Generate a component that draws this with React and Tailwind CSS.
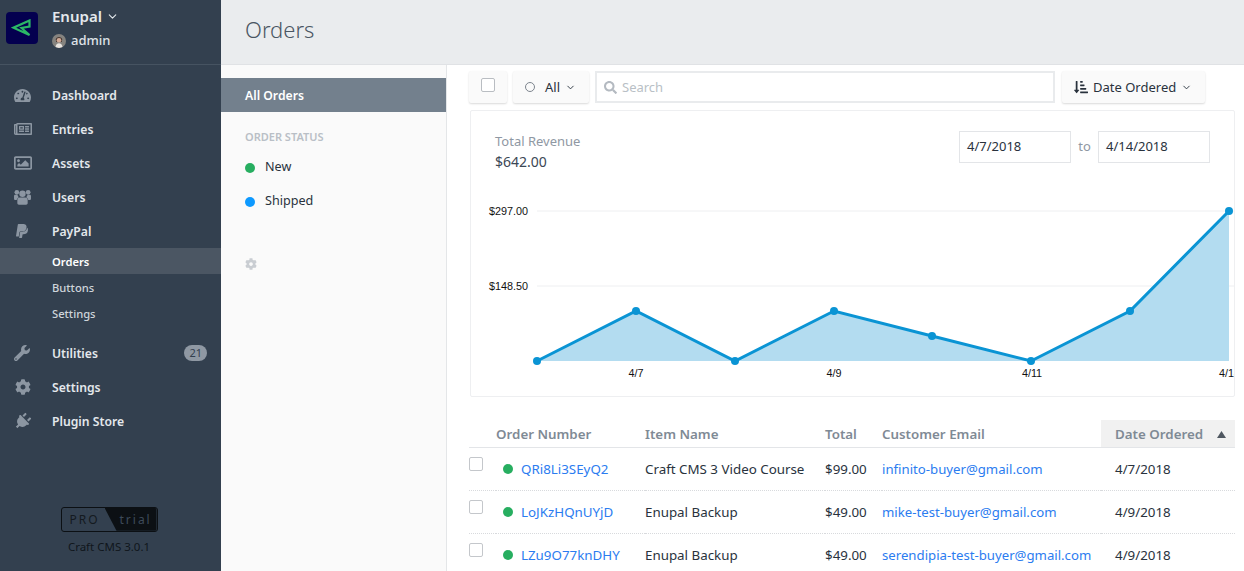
import { FaTachometerAlt, FaRegNewspaper, FaRegImage, FaPaypal, FaWrench, FaCog, FaPlug, FaSearch, FaSortAmountDownAlt } from 'react-icons/fa';
import { ChevronDown } from 'lucide-react';

function UsersIcon({ className }) {
  return (
    <svg viewBox="0 0 18 17" fill="currentColor" className={className}>
      <circle cx="9" cy="5" r="3.400" />
      <circle cx="3" cy="3.500" r="2.500" />
      <circle cx="15" cy="3.500" r="2.500" />
      <path d="M0 7.500C0 6.700.6 6.200 1.400 6.200h2.200c.3 1 .8 1.900 1.500 2.500-1.200.6-2 1.700-2.300 3H1.400C.6 11.700 0 11 0 10.300z" />
      <path d="M18 7.500c0-.8-.6-1.300-1.400-1.300h-2.200c-.3 1-.8 1.900-1.500 2.500 1.200.6 2 1.700 2.300 3h1.400c.8 0 1.400-.7 1.400-1.400z" />
      <path d="M6 9h6c1.500 0 2.500 1.100 2.500 2.600v3.400c0 1-.7 1.700-1.700 1.700H5.200c-1 0-1.700-.7-1.700-1.700v-3.400C3.500 10.100 4.500 9 6 9z" />
    </svg>
  );
}

const navTop = [
  { label: 'Dashboard', icon: FaTachometerAlt, iconClass: 'w-[17px] h-[17px]' },
  { label: 'Entries', icon: FaRegNewspaper, iconClass: 'w-[18px] h-[18px]' },
  { label: 'Assets', icon: FaRegImage, iconClass: 'w-[18px] h-[18px]' },
  { label: 'Users', icon: UsersIcon, iconClass: 'w-[17px] h-[16px]' },
  { label: 'PayPal', icon: FaPaypal, iconClass: 'w-[16px] h-[16px]' },
];

const navBottom = [
  { label: 'Utilities', icon: FaWrench, iconClass: 'w-[16px] h-[16px]', badge: '21' },
  { label: 'Settings', icon: FaCog, iconClass: 'w-[16px] h-[16px] ml-px' },
  { label: 'Plugin Store', icon: FaPlug, iconClass: 'w-[17px] h-[17px] rotate-45' },
];

const orders = [
  { id: 'QRi8Li3SEyQ2', item: 'Craft CMS 3 Video Course', total: '$99.00', email: 'infinito-buyer@gmail.com', date: '4/7/2018' },
  { id: 'LoJKzHQnUYjD', item: 'Enupal Backup', total: '$49.00', email: 'mike-test-buyer@gmail.com', date: '4/9/2018' },
  { id: 'LZu9O77knDHY', item: 'Enupal Backup', total: '$49.00', email: 'serendipia-test-buyer@gmail.com', date: '4/9/2018' },
];

function NavRow({ label, icon: Icon, badge, iconClass }) {
  return (
    <div className="h-[34px] flex items-center pl-[14px] pr-[14px] text-[12.2px] font-semibold text-[#e4e8ec]">
      <span className="w-[38px] flex-shrink-0 text-[#8c96a2]">
        <Icon className={iconClass} />
      </span>
      <span className="flex-1 pt-[2px]">{label}</span>
      {badge && (
        <span className="h-4 px-[5px] rounded-full bg-[#8f98a3] text-[#33404f] text-[11px] leading-4 font-normal">{badge}</span>
      )}
    </div>
  );
}

function Chart() {
  const points = [[67, 251], [166, 201], [265, 251], [364, 201], [462, 226], [561, 251], [660, 201], [759, 101]];
  const line = points.map((p) => p.join(',')).join(' ');
  return (
    <svg width="765" height="285" className="absolute left-[-1px] top-[-1px]" style={{ fontFamily: '"Liberation Sans", sans-serif' }}>
      <line x1="67" y1="101" x2="765" y2="101" stroke="#eeeff1" />
      <line x1="67" y1="176" x2="765" y2="176" stroke="#eeeff1" />
      <polygon points={`67,251 ${line} 759,251`} fill="#b3dcf0" />
      <polyline points={line} fill="none" stroke="#0a94d4" strokeWidth="3" />
      {points.map(([x, y]) => (
        <circle key={x} cx={x} cy={y} r="4" fill="#0a94d4" />
      ))}
      <text x="58" y="105" textAnchor="end" fontSize="10.8" fill="#111">$297.00</text>
      <text x="58" y="180" textAnchor="end" fontSize="10.8" fill="#111">$148.50</text>
      <text x="166" y="267" textAnchor="middle" fontSize="10.8" fill="#111">4/7</text>
      <text x="364" y="267" textAnchor="middle" fontSize="10.8" fill="#111">4/9</text>
      <text x="562" y="267" textAnchor="middle" fontSize="10.8" fill="#111">4/11</text>
      <text x="749" y="267" fontSize="10.8" fill="#111">4/14</text>
    </svg>
  );
}

export default function App() {
  return (
    <div className="h-[571px] w-[1244px] overflow-hidden flex bg-white text-[14px] text-[#29323d]" style={{ fontFamily: '"Noto Sans", sans-serif' }}>
      {/* Sidebar */}
      <aside className="w-[221px] flex-shrink-0 bg-[#33404f] flex flex-col">
        <div className="h-[65px] flex-shrink-0 border-b border-[#465361] flex items-start pl-[6px] pt-[12px]">
          <div className="w-8 h-8 rounded-[4px] bg-[#04004f] flex items-center justify-center">
            <svg width="22" height="18" viewBox="0 0 22 18" fill="none" stroke="#2bb866" strokeWidth="2.200">
              <path d="M18.500 16 2.500 8.700 18.500 1.500v6l-8 1.500z" />
            </svg>
          </div>
          <div className="ml-[14px] -mt-[8px]">
            <div className="flex items-center h-6 text-[15px] font-semibold text-[#e4e8ec]">
              Enupal
              <ChevronDown className="w-[13px] h-[13px] ml-1" />
            </div>
            <div className="flex items-center h-[22px] mt-[2px] text-[13px] font-medium text-[#dfe3e8]">
              <svg width="14" height="14" viewBox="0 0 14 14" className="mr-[5px]">
                <circle cx="7" cy="7" r="7" fill="#85837f" />
                <path d="M3.800 5.500C3.800 2 10.200 2 10.200 5.500L9.800 8H4.200z" fill="#4a3a32" />
                <circle cx="7" cy="6.300" r="2.300" fill="#d2ab98" />
                <path d="M3.500 13c.3-2.500 1.600-3.800 3.500-3.800s3.200 1.300 3.500 3.800L7 14z" fill="#e8e4df" />
              </svg>
              admin
            </div>
          </div>
        </div>
        <nav className="pt-[13px]">
          {navTop.map((n) => (
            <NavRow key={n.label} {...n} />
          ))}
          <div className="h-[26px] flex items-center pl-[52px] pt-[2px] bg-[#4b5663] text-[11.2px] font-semibold text-white">Orders</div>
          <div className="h-[26px] flex items-center pl-[52px] pt-[2px] text-[11.2px] font-medium text-[#cfd5db]">Buttons</div>
          <div className="h-[26px] flex items-center pl-[52px] pt-[2px] text-[11.2px] font-medium text-[#cfd5db]">Settings</div>
          <div className="h-[10px]" />
          {navBottom.map((n) => (
            <NavRow key={n.label} {...n} />
          ))}
        </nav>
        <div className="mt-auto pb-[16px] flex flex-col items-center pr-[3px]">
          <div className="w-[97px] h-[25px] rounded-[3px] border border-[#0c1014] flex overflow-hidden relative text-[12px] tracking-[2px]">
            <span className="w-[43px] pl-[8px] leading-[23px] text-[#141a20]">PRO</span>
            <span className="flex-1 bg-[#0c1014] pl-[15px] leading-[23px] text-[#3d4a59] [clip-path:polygon(0_0,100%_0,100%_100%,12px_100%)]">trial</span>
          </div>
          <div className="mt-[6px] text-[11.5px] text-[#10161c]">Craft CMS 3.0.1</div>
        </div>
      </aside>

      <div className="flex-1 min-w-0 flex flex-col">
        {/* Page header */}
        <header className="h-[65px] flex-shrink-0 bg-[#eaecee] border-b border-[#e0e2e5] flex items-center pl-[24px] pb-[6px] text-[22px] font-light text-[#4a5663]">
          Orders
        </header>

        <div className="flex-1 min-h-0 flex">
          {/* Status sidebar */}
          <div className="w-[226px] flex-shrink-0 bg-[#fafafa] border-r border-[#e4e6e8] pt-[13px]">
            <div className="h-[34px] bg-[#73808d] flex items-center pl-[24px] pt-[2px] text-[12.2px] font-semibold text-white">All Orders</div>
            <div className="mt-[17px] pl-[24px] text-[11px] font-semibold text-[#b9bfc6]">ORDER STATUS</div>
            <div className="mt-[5px] h-[34px] flex items-center pl-[24px] text-[12.6px]">
              <span className="w-[10px] h-[10px] rounded-full bg-[#27ae60] mr-[10px]" />
              New
            </div>
            <div className="h-[34px] flex items-center pl-[24px] text-[12.6px]">
              <span className="w-[10px] h-[10px] rounded-full bg-[#0d99ff] mr-[10px]" />
              Shipped
            </div>
            <FaCog className="ml-[24px] mt-[39px] w-3 h-3 text-[#c9cdd2]" />
          </div>

          {/* Main */}
          <main className="flex-1 min-w-0 pl-[22px] pr-[9px] pt-[6px]">
            <div className="flex items-stretch h-[32px]">
              <div className="w-[38px] bg-[#fafafa] rounded-[2px] shadow-[0_1px_2px_rgba(0,0,0,0.15)] flex items-center justify-center">
                <span className="w-[14px] h-[14px] mb-[4px] border border-[#b9bdc2] rounded-[2px] bg-white" />
              </div>
              <div className="ml-[6px] w-[76px] bg-[#fafafa] rounded-[2px] shadow-[0_1px_2px_rgba(0,0,0,0.15)] flex items-center pl-[12px] text-[13px]">
                <span className="w-[10px] h-[10px] rounded-full border border-[#7d858e] mr-[10px]" />
                <span className="pt-px">All</span>
                <ChevronDown className="w-[11px] h-[11px] ml-[5px]" />
              </div>
              <div className="ml-[6px] w-[460px] border-2 border-[#e9ebed] flex items-center pl-[7px] text-[13px] text-[#b9bfc6]">
                <FaSearch className="w-[13px] h-[13px] mr-[5px] text-[#b4bac1]" />
                <span className="pt-px">Search</span>
              </div>
              <div className="ml-[7px] w-[143px] bg-[#fafafa] rounded-[2px] shadow-[0_1px_2px_rgba(0,0,0,0.15)] flex items-center pl-[12px] text-[13px]">
                <FaSortAmountDownAlt className="w-[14px] h-[14px] mr-[5px]" />
                <span className="pt-px">Date Ordered</span>
                <ChevronDown className="w-[11px] h-[11px] ml-[5px]" />
              </div>
            </div>

            {/* Revenue card */}
            <section className="relative mt-[7px] ml-px h-[287px] border border-[#eeeff1] rounded-[2px] overflow-hidden">
              <Chart />
              <div className="absolute left-[24px] top-[20px] text-[13px] leading-[20px]">
                <div className="text-[#8f98a3]">Total Revenue</div>
                <div className="mt-px text-[14px] text-[#3b4755]">$642.00</div>
              </div>
              <div className="absolute left-[488px] top-[20px] flex items-center text-[13px]">
                <div className="w-[112px] h-[32px] border border-[#e3e5e8] flex items-center pl-[7px]">4/7/2018</div>
                <span className="w-[27px] text-center text-[#8f98a3]">to</span>
                <div className="w-[112px] h-[32px] border border-[#e3e5e8] flex items-center pl-[7px]">4/14/2018</div>
              </div>
            </section>

            {/* Orders table */}
            <table className="mt-[23px] w-[766px] table-fixed text-[13.35px]">
              <thead>
                <tr className="h-[27px] border-b border-[#e3e5e8] text-[#7f8a95]">
                  <th className="w-[27px]" />
                  <th className="w-[149px] pt-[2px] text-left font-semibold">Order Number</th>
                  <th className="w-[180px] pt-[2px] text-left font-semibold">Item Name</th>
                  <th className="w-[57px] pt-[2px] text-left font-semibold">Total</th>
                  <th className="w-[219px] pt-[2px] text-left font-semibold">Customer Email</th>
                  <th className="bg-[#f1f1f1] pl-[14px] pt-[2px] text-left font-semibold">
                    <span className="flex items-center justify-between pr-[9px]">
                      Date Ordered
                      <svg width="9" height="7" viewBox="0 0 9 7"><path d="M4.500 0 9 7H0z" fill="#4f5760" /></svg>
                    </span>
                  </th>
                </tr>
              </thead>
              <tbody>
                {orders.map((o) => (
                  <tr key={o.id} className="h-[43px] border-b border-dotted border-[#d8dadd]">
                    <td>
                      <span className="block w-[14px] h-[14px] mb-[9px] border border-[#c4c7cb] rounded-[2px]" />
                    </td>
                    <td className="pt-[2px]">
                      <span className="flex items-center">
                        <span className="w-[10px] h-[10px] rounded-full bg-[#27ae60] ml-[7px] mr-[8px]" />
                        <span className="text-[#2b7cf0]">{o.id}</span>
                      </span>
                    </td>
                    <td className="pt-[2px]">{o.item}</td>
                    <td className="pt-[2px]">{o.total}</td>
                    <td className="pt-[2px] text-[13.2px] text-[#2b7cf0]">{o.email}</td>
                    <td className="pl-[14px] pt-[2px]">{o.date}</td>
                  </tr>
                ))}
              </tbody>
            </table>
          </main>
        </div>
      </div>
    </div>
  );
}
